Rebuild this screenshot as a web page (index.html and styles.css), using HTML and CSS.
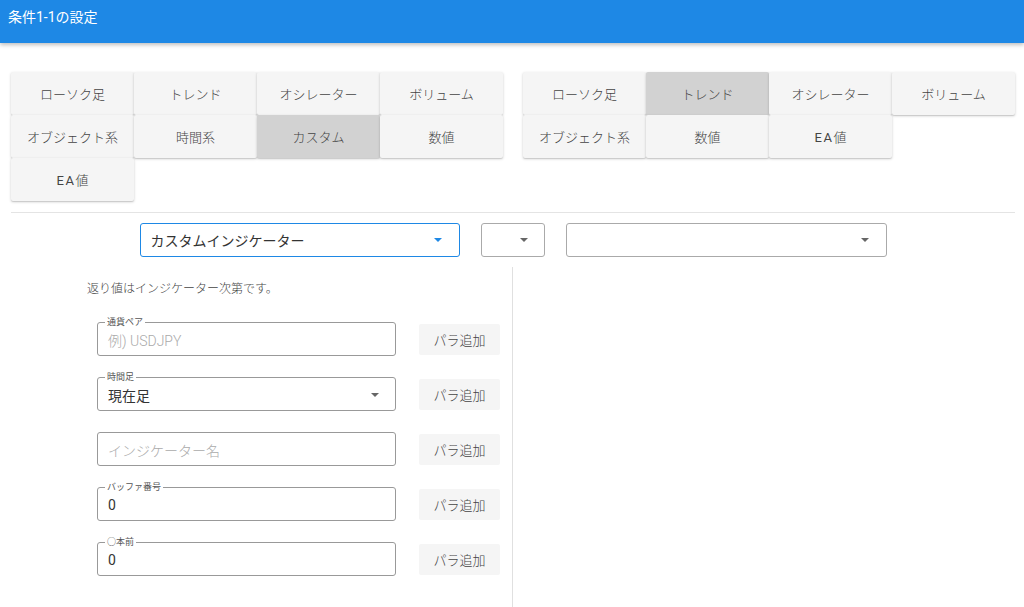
FILE: index.html
```html
<!DOCTYPE html>
<html lang="ja">
<head>
    <meta charset="UTF-8">
    <title>条件1-1の設定</title>
    <link rel="stylesheet" href="styles.css">
</head>
<body>
    <header class="app-bar">条件1-1の設定</header>

    <main class="content">
        <div class="groups">
            <div class="btn-grid">
                <button class="cat-btn">ローソク足</button>
                <button class="cat-btn">トレンド</button>
                <button class="cat-btn">オシレーター</button>
                <button class="cat-btn">ボリューム</button>
                <button class="cat-btn">オブジェクト系</button>
                <button class="cat-btn">時間系</button>
                <button class="cat-btn active">カスタム</button>
                <button class="cat-btn">数値</button>
                <button class="cat-btn"><span class="latin">EA</span>値</button>
            </div>
            <div class="btn-grid">
                <button class="cat-btn">ローソク足</button>
                <button class="cat-btn active">トレンド</button>
                <button class="cat-btn">オシレーター</button>
                <button class="cat-btn">ボリューム</button>
                <button class="cat-btn">オブジェクト系</button>
                <button class="cat-btn">数値</button>
                <button class="cat-btn"><span class="latin">EA</span>値</button>
            </div>
        </div>

        <hr class="divider">

        <div class="select-row">
            <div class="select select-main focused">
                <span>カスタムインジケーター</span>
                <span class="arrow"></span>
            </div>
            <div class="select select-op">
                <span></span>
                <span class="arrow"></span>
            </div>
            <div class="select select-right">
                <span></span>
                <span class="arrow"></span>
            </div>
        </div>

        <div class="columns">
            <section class="col-left">
                <p class="hint">返り値はインジケーター次第です。</p>

                <div class="param-row">
                    <div class="field">
                        <label>通貨ペア</label>
                        <span class="placeholder">例) USDJPY</span>
                    </div>
                    <button class="add-btn">パラ追加</button>
                </div>

                <div class="param-row">
                    <div class="field">
                        <label>時間足</label>
                        <span class="value">現在足</span>
                        <span class="arrow"></span>
                    </div>
                    <button class="add-btn">パラ追加</button>
                </div>

                <div class="param-row">
                    <div class="field">
                        <span class="placeholder">インジケーター名</span>
                    </div>
                    <button class="add-btn">パラ追加</button>
                </div>

                <div class="param-row">
                    <div class="field">
                        <label>バッファ番号</label>
                        <span class="value">0</span>
                    </div>
                    <button class="add-btn">パラ追加</button>
                </div>

                <div class="param-row">
                    <div class="field">
                        <label>○本前</label>
                        <span class="value">0</span>
                    </div>
                    <button class="add-btn">パラ追加</button>
                </div>
            </section>
            <section class="col-right"></section>
        </div>
    </main>
</body>
</html>
```

FILE: styles.css
```css
body {
    margin: 0;
    font-family: Roboto, "Noto Sans CJK JP", sans-serif;
    color: #333;
    background: #fff;
    overflow: hidden;
}
.app-bar {
    height: 43px;
    box-sizing: border-box;
    padding: 8px 8px 0;
    background: #1e88e5;
    color: #fff;
    font-size: 14px;
    line-height: 18px;
    box-shadow: 0 2px 4px rgba(0, 0, 0, 0.25);
}
.content {
    padding: 29px 9px 0 11px;
}
.groups {
    display: flex;
    gap: 20px;
}
.btn-grid {
    display: grid;
    grid-template-columns: repeat(4, 123px);
    align-content: start;
}
.cat-btn {
    height: 43px;
    border: none;
    border-radius: 2px;
    background: #f5f5f5;
    color: #444;
    font-family: inherit;
    font-size: 13px;
    font-weight: 300;
    box-shadow: 0 1px 3px rgba(0, 0, 0, 0.18), 0 1px 1px rgba(0, 0, 0, 0.1);
    cursor: pointer;
}
.cat-btn .latin {
    letter-spacing: 1.5px;
    font-weight: 400;
}
.cat-btn.active {
    background: #d2d2d2;
}
.divider {
    margin: 11px 0 0;
    border: none;
    border-top: 1px solid #e4e4e4;
}
.select-row {
    display: flex;
    justify-content: center;
    gap: 21px;
    margin-top: 10px;
}
.select {
    height: 34px;
    box-sizing: border-box;
    border: 1px solid #aaa;
    border-radius: 3px;
    display: flex;
    align-items: center;
    justify-content: space-between;
    padding: 0 17px 0 10px;
    font-size: 14px;
    color: #333;
}
.select-main {
    width: 320px;
}
.select-main.focused {
    border: 1.5px solid #1e88e5;
}
.select-main.focused .arrow {
    border-top-color: #1e88e5;
}
.select-op {
    width: 64px;
    padding-right: 16px;
}
.select-right {
    width: 321px;
}
.arrow {
    width: 0;
    height: 0;
    border-left: 4px solid transparent;
    border-right: 4px solid transparent;
    border-top: 4px solid #666;
}
.columns {
    display: flex;
    margin-top: 10px;
    height: 340px;
}
.col-left {
    width: 502px;
    box-sizing: border-box;
    border-right: 1px solid #e0e0e0;
    padding: 16px 0 0 76px;
}
.col-right {
    flex: 1;
}
.hint {
    margin: 0 0 27px;
    font-size: 12px;
    line-height: 12px;
    font-weight: 300;
    color: #444;
}
.param-row {
    display: flex;
    align-items: center;
    gap: 23px;
    margin: 0 0 21px 10px;
}
.field {
    position: relative;
    width: 299px;
    height: 34px;
    box-sizing: border-box;
    border: 1px solid #999;
    border-radius: 3px;
    display: flex;
    align-items: center;
    justify-content: space-between;
    padding: 2px 16px 0 10px;
    font-size: 14px;
}
.field label {
    position: absolute;
    top: -7px;
    left: 7px;
    padding: 0 2px;
    background: #fff;
    font-size: 9px;
    line-height: 12px;
    color: #555;
}
.placeholder {
    color: #aaa;
    font-weight: 300;
}
.value {
    color: #333;
}
.add-btn {
    width: 81px;
    height: 31px;
    border: none;
    border-radius: 2px;
    background: #f5f5f5;
    color: #444;
    font-family: inherit;
    font-size: 13px;
    font-weight: 300;
    cursor: pointer;
}
```
